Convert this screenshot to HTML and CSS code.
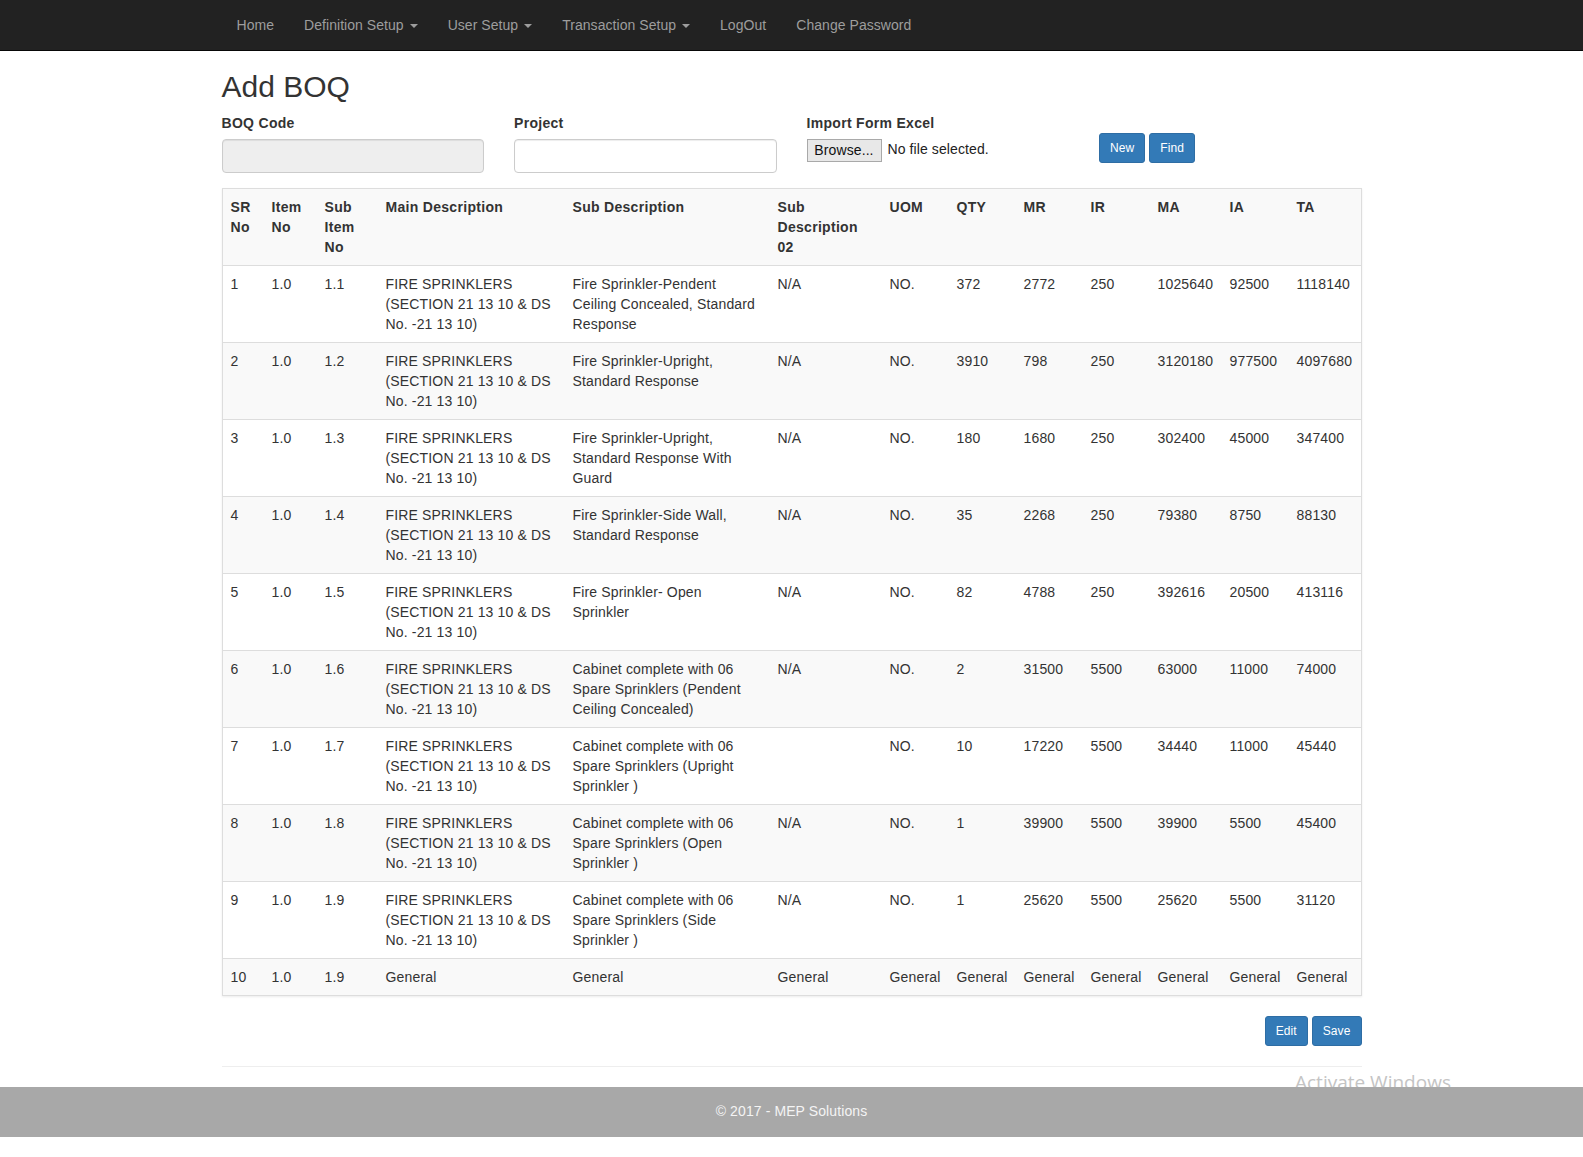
FILE: index.html
```html
<!DOCTYPE html>
<html lang="en">
<head>
<meta charset="utf-8">
<title>Add BOQ</title>
<link rel="stylesheet" href="styles.css">
</head>
<body>
<nav class="navbar">
  <div class="container">
    <ul class="nav">
      <li><a href="#">Home</a></li>
      <li><a href="#">Definition Setup <span class="caret"></span></a></li>
      <li><a href="#">User Setup <span class="caret"></span></a></li>
      <li><a href="#">Transaction Setup <span class="caret"></span></a></li>
      <li><a href="#">LogOut</a></li>
      <li><a href="#">Change Password</a></li>
    </ul>
  </div>
</nav>

<div class="container body-content">
  <h2 class="page-title">Add BOQ</h2>

  <div class="form-row">
    <div class="col">
      <label class="form-label">BOQ Code</label>
      <input class="form-control" type="text" disabled>
    </div>
    <div class="col">
      <label class="form-label">Project</label>
      <input class="form-control" type="text">
    </div>
    <div class="col">
      <label class="form-label">Import Form Excel</label>
      <div class="file-input">
        <span class="browse-btn">Browse...</span>
        <span class="file-name">No file selected.</span>
      </div>
    </div>
    <div class="col col-actions">
      <button class="btn btn-primary btn-sm" type="button">New</button>
      <button class="btn btn-primary btn-sm" type="button">Find</button>
    </div>
  </div>

  <div class="table-wrap">
    <table class="boq-table">
      <colgroup>
        <col class="w-sr"><col class="w-item"><col class="w-sub"><col class="w-main"><col class="w-subdesc"><col class="w-subdesc2">
        <col class="w-uom"><col class="w-num"><col class="w-num"><col class="w-num"><col class="w-ma"><col class="w-num"><col class="w-ta">
      </colgroup>
      <tbody>
        <tr class="head">
          <th>SR No</th><th>Item No</th><th>Sub Item No</th><th>Main Description</th><th>Sub Description</th><th>Sub Description 02</th>
          <th>UOM</th><th>QTY</th><th>MR</th><th>IR</th><th>MA</th><th>IA</th><th>TA</th>
        </tr>
        <tr>
          <td>1</td><td>1.0</td><td>1.1</td><td>FIRE SPRINKLERS (SECTION 21 13 10 &amp; DS No. -21 13 10)</td>
          <td>Fire Sprinkler-Pendent Ceiling Concealed, Standard Response</td><td>N/A</td><td>NO.</td>
          <td>372</td><td>2772</td><td>250</td><td>1025640</td><td>92500</td><td>1118140</td>
        </tr>
        <tr>
          <td>2</td><td>1.0</td><td>1.2</td><td>FIRE SPRINKLERS (SECTION 21 13 10 &amp; DS No. -21 13 10)</td>
          <td>Fire Sprinkler-Upright, Standard Response</td><td>N/A</td><td>NO.</td>
          <td>3910</td><td>798</td><td>250</td><td>3120180</td><td>977500</td><td>4097680</td>
        </tr>
        <tr>
          <td>3</td><td>1.0</td><td>1.3</td><td>FIRE SPRINKLERS (SECTION 21 13 10 &amp; DS No. -21 13 10)</td>
          <td>Fire Sprinkler-Upright, Standard Response With Guard</td><td>N/A</td><td>NO.</td>
          <td>180</td><td>1680</td><td>250</td><td>302400</td><td>45000</td><td>347400</td>
        </tr>
        <tr>
          <td>4</td><td>1.0</td><td>1.4</td><td>FIRE SPRINKLERS (SECTION 21 13 10 &amp; DS No. -21 13 10)</td>
          <td>Fire Sprinkler-Side Wall, Standard Response</td><td>N/A</td><td>NO.</td>
          <td>35</td><td>2268</td><td>250</td><td>79380</td><td>8750</td><td>88130</td>
        </tr>
        <tr>
          <td>5</td><td>1.0</td><td>1.5</td><td>FIRE SPRINKLERS (SECTION 21 13 10 &amp; DS No. -21 13 10)</td>
          <td>Fire Sprinkler- Open Sprinkler</td><td>N/A</td><td>NO.</td>
          <td>82</td><td>4788</td><td>250</td><td>392616</td><td>20500</td><td>413116</td>
        </tr>
        <tr>
          <td>6</td><td>1.0</td><td>1.6</td><td>FIRE SPRINKLERS (SECTION 21 13 10 &amp; DS No. -21 13 10)</td>
          <td>Cabinet complete with 06 Spare Sprinklers (Pendent Ceiling Concealed)</td><td>N/A</td><td>NO.</td>
          <td>2</td><td>31500</td><td>5500</td><td>63000</td><td>11000</td><td>74000</td>
        </tr>
        <tr>
          <td>7</td><td>1.0</td><td>1.7</td><td>FIRE SPRINKLERS (SECTION 21 13 10 &amp; DS No. -21 13 10)</td>
          <td>Cabinet complete with 06 Spare Sprinklers (Upright Sprinkler )</td><td></td><td>NO.</td>
          <td>10</td><td>17220</td><td>5500</td><td>34440</td><td>11000</td><td>45440</td>
        </tr>
        <tr>
          <td>8</td><td>1.0</td><td>1.8</td><td>FIRE SPRINKLERS (SECTION 21 13 10 &amp; DS No. -21 13 10)</td>
          <td>Cabinet complete with 06 Spare Sprinklers (Open Sprinkler )</td><td>N/A</td><td>NO.</td>
          <td>1</td><td>39900</td><td>5500</td><td>39900</td><td>5500</td><td>45400</td>
        </tr>
        <tr>
          <td>9</td><td>1.0</td><td>1.9</td><td>FIRE SPRINKLERS (SECTION 21 13 10 &amp; DS No. -21 13 10)</td>
          <td>Cabinet complete with 06 Spare Sprinklers (Side Sprinkler )</td><td>N/A</td><td>NO.</td>
          <td>1</td><td>25620</td><td>5500</td><td>25620</td><td>5500</td><td>31120</td>
        </tr>
        <tr>
          <td>10</td><td>1.0</td><td>1.9</td><td>General</td><td>General</td><td>General</td><td>General</td>
          <td>General</td><td>General</td><td>General</td><td>General</td><td>General</td><td>General</td>
        </tr>
      </tbody>
    </table>
  </div>

  <div class="actions">
    <button class="btn btn-primary btn-sm" type="button">Edit</button>
    <button class="btn btn-primary btn-sm" type="button">Save</button>
  </div>

  <hr class="divider">
</div>

<div class="watermark">Activate Windows</div>

<footer class="site-footer">
  <p>&copy; 2017 - MEP Solutions</p>
</footer>
</body>
</html>
```

FILE: styles.css
```css
* { box-sizing: border-box; }

html, body { margin: 0; padding: 0; }

body {
  font-family: "Liberation Sans", Arial, Helvetica, sans-serif;
  font-size: 14px;
  line-height: 1.42857;
  letter-spacing: 0.1px;
  color: #333;
  background: #fff;
  padding-bottom: 20px;
  position: relative;
}

.container {
  width: 1170px;
  margin: 0 auto;
  padding: 0 15px;
}

/* Navbar */
.navbar {
  background: #222;
  border-bottom: 1px solid #080808;
  height: 51px;
}
.nav {
  list-style: none;
  margin: 0;
  padding: 0;
  display: flex;
}
.nav a {
  display: block;
  padding: 15px;
  line-height: 20px;
  letter-spacing: 0.05px;
  color: #9d9d9d;
  text-decoration: none;
}
.caret {
  display: inline-block;
  width: 0;
  height: 0;
  margin-left: 2px;
  vertical-align: middle;
  border-top: 4px solid;
  border-right: 4px solid transparent;
  border-left: 4px solid transparent;
}

/* Title */
.page-title {
  font-size: 30px;
  font-weight: 500;
  line-height: 1.1;
  letter-spacing: 0;
  margin: 19px 0 11px;
  color: #333;
}

/* Form */
.form-row {
  display: grid;
  grid-template-columns: repeat(4, 1fr);
  margin: 0 -15px;
}
.col {
  padding: 0 15px;
  margin-bottom: 15px;
}
.form-label {
  display: block;
  font-weight: bold;
  letter-spacing: 0.3px;
  margin-bottom: 5px;
}
.form-control {
  display: block;
  width: 100%;
  height: 34px;
  padding: 6px 12px;
  font: inherit;
  color: #555;
  background: #fff;
  border: 1px solid #ccc;
  border-radius: 4px;
  box-shadow: inset 0 1px 1px rgba(0,0,0,.075);
}
.form-control:disabled {
  background: #eee;
}
.file-input {
  display: flex;
  align-items: center;
  gap: 6px;
  height: 23px;
  margin-top: 1px;
  color: #222;
}
.browse-btn {
  display: inline-block;
  width: 75px;
  height: 23px;
  line-height: 21px;
  text-align: center;
  background: #e8e8e8;
  border: 1px solid #a9a9a9;
  color: #111;
}
.col-actions {
  display: flex;
  gap: 4px;
  align-items: flex-start;
  padding-top: 19px;
}

/* Buttons */
.btn {
  display: inline-block;
  font-family: inherit;
  letter-spacing: 0.1px;
  border: 1px solid transparent;
  cursor: pointer;
}
.btn-sm {
  padding: 5px 10px;
  font-size: 12px;
  line-height: 1.5;
  border-radius: 3px;
}
.btn-primary {
  color: #fff;
  background: #337ab7;
  border-color: #2e6da4;
}

/* Table */
.table-wrap {
  border: 1px solid #ddd;
  box-shadow: 0 1px 2px rgba(0,0,0,.08);
  margin-bottom: 20px;
}
.boq-table {
  width: 100%;
  table-layout: fixed;
  border-collapse: collapse;
}
.w-sr { width: 41px; }
.w-item { width: 53px; }
.w-sub { width: 61px; }
.w-main { width: 187px; }
.w-subdesc { width: 205px; }
.w-subdesc2 { width: 112px; }
.w-uom { width: 67px; }
.w-num { width: 67px; }
.w-ma { width: 72px; }
.w-ta { width: 72px; }

.boq-table th,
.boq-table td {
  padding: 8px;
  line-height: 20px;
  vertical-align: top;
  text-align: left;
  border-top: 1px solid #ddd;
}
.boq-table td { letter-spacing: 0.16px; }
.boq-table th { font-weight: bold; letter-spacing: 0.3px; }
.boq-table tr:first-child th { border-top: 0; }
.boq-table tr:nth-child(odd) { background: #f9f9f9; }

/* Actions */
.actions {
  display: flex;
  justify-content: flex-end;
  gap: 4px;
}
.divider {
  margin: 20px 0;
  border: 0;
  border-top: 1px solid #eee;
}

/* Watermark (overlay text from screenshot) */
.watermark {
  position: absolute;
  left: 1295px;
  top: 1070px;
  font-family: "Open Sans", "Noto Sans", sans-serif;
  font-size: 19px;
  color: #c4c4c4;
  line-height: 24px;
  letter-spacing: 0;
  z-index: 0;
}

/* Footer */
.site-footer {
  position: relative;
  z-index: 1;
  background: #a8a8a8;
  height: 50px;
  display: flex;
  align-items: center;
  justify-content: center;
}
.site-footer p {
  margin: 0;
  color: #f4f4f4;
}
```
